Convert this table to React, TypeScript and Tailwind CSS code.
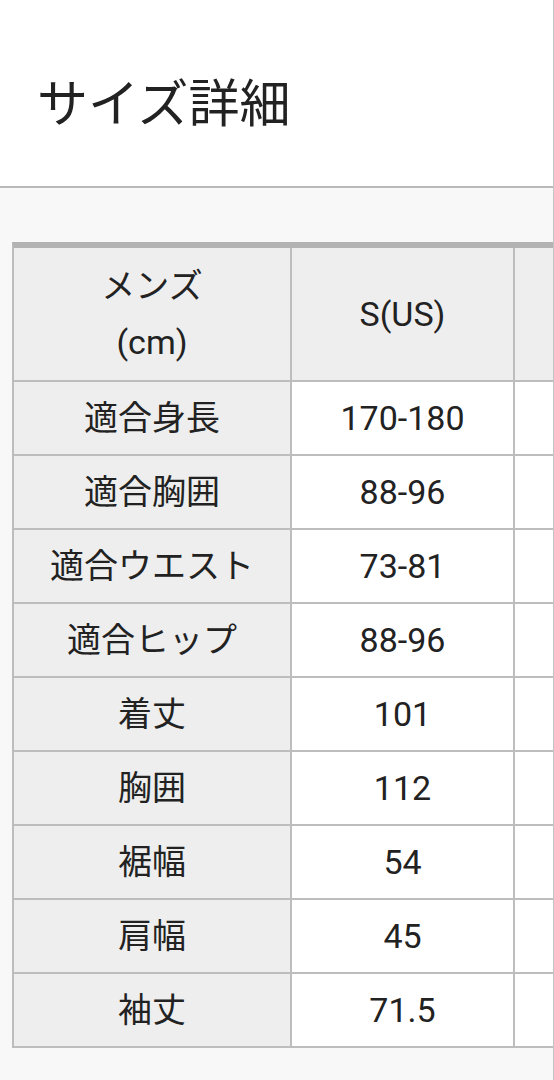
import React from 'react';

const rows: [string, string][] = [
  ['適合身長', '170-180'],
  ['適合胸囲', '88-96'],
  ['適合ウエスト', '73-81'],
  ['適合ヒップ', '88-96'],
  ['着丈', '101'],
  ['胸囲', '112'],
  ['裾幅', '54'],
  ['肩幅', '45'],
  ['袖丈', '71.5'],
];

export default function App() {
  return (
    <div className="w-[554px] h-[1080px] overflow-hidden bg-[#f8f8f8] border-r border-[#c4c4c4] text-[#222] font-['Roboto','Noto_Sans_CJK_JP',sans-serif]">
      {/* Page header */}
      <div className="h-[188px] bg-white border-b-2 border-[#b9b9b9] pl-[37px] pt-[79px]">
        <h1 className="text-[51px] leading-none font-normal">サイズ詳細</h1>
      </div>

      {/* Size table */}
      <div className="pt-[54px] pl-[12px]">
        <div className="w-[800px] border-t-[6px] border-l-2 border-t-[#b3b3b3] border-l-[#bdbdbd] text-[34px]">
          <div className="flex h-[134px] bg-[#eeeeee] border-b-2 border-[#bdbdbd]">
            <div className="w-[278px] shrink-0 border-r-2 border-[#bdbdbd] flex flex-col items-center justify-center leading-[56px]">
              <span>メンズ</span>
              <span>(cm)</span>
            </div>
            <div className="w-[223px] shrink-0 border-r-2 border-[#bdbdbd] flex items-center justify-center">
              S(US)
            </div>
            <div className="w-[240px] shrink-0 border-r-2 border-[#bdbdbd]" />
          </div>
          {rows.map(([label, value]) => (
            <div key={label} className="flex h-[74px] border-b-2 border-[#bdbdbd]">
              <div className="w-[278px] shrink-0 bg-[#eeeeee] border-r-2 border-[#bdbdbd] flex items-center justify-center">
                {label}
              </div>
              <div className="w-[223px] shrink-0 bg-white border-r-2 border-[#bdbdbd] flex items-center justify-center">
                {value}
              </div>
              <div className="w-[240px] shrink-0 bg-white border-r-2 border-[#bdbdbd]" />
            </div>
          ))}
        </div>
      </div>
    </div>
  );
}
